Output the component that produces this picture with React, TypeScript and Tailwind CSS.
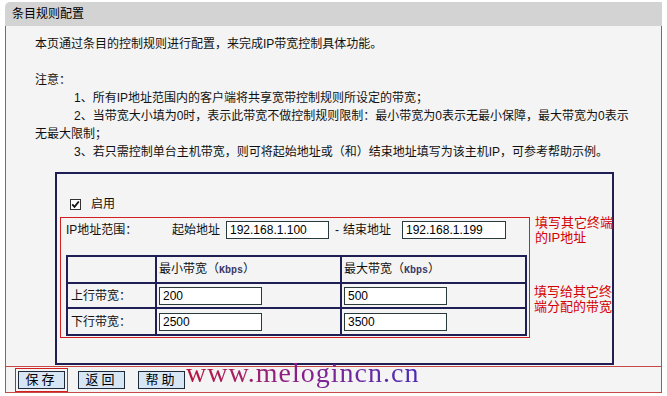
import React from "react";

const NAVY = "border-[#1f1f55]";

function Input({ value, w = "w-[103px]" }: { value: string; w?: string }) {
  return (
    <div
      className={`${w} h-[18px] border border-[#2a3a3a] bg-white pl-[3px] text-[12px] leading-[16px] text-black flex items-center`}
      style={{ fontFamily: '"Liberation Sans", Arial, sans-serif' }}
    >
      {value}
    </div>
  );
}

function Btn({ label }: { label: string }) {
  return (
    <div className="w-[47px] h-[18px] border border-[#1c2a3c] bg-[#d6e6f5] flex items-center justify-center text-[13px] leading-[16px] text-black tracking-[3px]">
      {label}
    </div>
  );
}

export default function App() {
  return (
    <div
      className="w-[667px] h-[396px] bg-white relative overflow-hidden text-[12px] text-[#111]"
      style={{ fontFamily: '"Liberation Sans", "Noto Sans CJK SC", sans-serif' }}
    >
      <div className="pt-[2px]">
        {/* title bar */}
        <div className="mx-[5px] h-[24px] bg-[#d3d3d3] rounded-tl-[5px] pl-[7px] flex items-center text-[12px] text-black">
          条目规则配置
        </div>

        {/* main content */}
        <div className="mx-[5px] h-[340px] border-x border-[#c84848] bg-[#f4f4f4] pl-[29px] pt-[9px] leading-[18px]">
          <div>本页通过条目的控制规则进行配置，来完成IP带宽控制具体功能。</div>
          <div className="mt-[18px]">注意：</div>
          <div className="pl-[39px]">1、所有IP地址范围内的客户端将共享宽带控制规则所设定的带宽；</div>
          <div className="pl-[39px]">2、当带宽大小填为0时，表示此带宽不做控制规则限制：最小带宽为0表示无最小保障，最大带宽为0表示</div>
          <div>无最大限制；</div>
          <div className="pl-[39px]">3、若只需控制单台主机带宽，则可将起始地址或（和）结束地址填写为该主机IP，可参考帮助示例。</div>

          {/* navy box */}
          <div className={`mt-[11px] ml-[20px] w-[559px] h-[193px] border-2 ${NAVY}`}>
            <div className="mt-[23px] h-[14px] pl-[13px] flex items-center">
              <span className="w-[11px] h-[11px] border border-[#333] bg-white flex items-center justify-center">
                <svg width="9" height="9" viewBox="0 0 9 9">
                  <path d="M1.2 4.3 L3.5 6.8 L7.8 1.5" fill="none" stroke="#111" strokeWidth="1.8" />
                </svg>
              </span>
              <span className="ml-[10px] leading-[14px]">启用</span>
            </div>

            <div className="mt-[6px] ml-[3px] flex items-start">
              {/* red annotation box */}
              <div className="w-[470px] h-[121px] shrink-0 border border-[#d02020] pt-[3px]">
                <div className="pl-[5px] flex items-center h-[18px]">
                  <span className="w-[106px]">IP地址范围：</span>
                  <span className="w-[54px]">起始地址</span>
                  <Input value="192.168.1.100" />
                  <span className="ml-[6px]">-</span>
                  <span className="ml-[4px] w-[59px]">结束地址</span>
                  <Input value="192.168.1.199" w="w-[104px]" />
                </div>

                <table className={`mt-[16px] ml-[5px] border-collapse table-fixed w-[459px] border-2 ${NAVY}`}>
                  <colgroup>
                    <col className="w-[89px]" />
                    <col className="w-[185px]" />
                    <col className="w-[185px]" />
                  </colgroup>
                  <tbody>
                    <tr className="h-[27px]">
                      <td className={`border-2 ${NAVY}`}></td>
                      <td className={`border-2 ${NAVY} pl-[2px]`}>
                        最小带宽（
                        <span className="text-[10px] font-bold text-[#3a3a6a]" style={{ fontFamily: '"Liberation Mono", monospace' }}>
                          Kbps
                        </span>
                        ）
                      </td>
                      <td className={`border-2 ${NAVY} pl-[2px]`}>
                        最大带宽（
                        <span className="text-[10px] font-bold text-[#3a3a6a]" style={{ fontFamily: '"Liberation Mono", monospace' }}>
                          Kbps
                        </span>
                        ）
                      </td>
                    </tr>
                    <tr className="h-[25px]">
                      <td className={`border-2 ${NAVY} pl-[3px]`}>上行带宽：</td>
                      <td className={`border-2 ${NAVY} pl-[2px]`}>
                        <Input value="200" />
                      </td>
                      <td className={`border-2 ${NAVY} pl-[2px]`}>
                        <Input value="500" />
                      </td>
                    </tr>
                    <tr className="h-[27px]">
                      <td className={`border-2 ${NAVY} pl-[3px]`}>下行带宽：</td>
                      <td className={`border-2 ${NAVY} pl-[2px]`}>
                        <Input value="2500" />
                      </td>
                      <td className={`border-2 ${NAVY} pl-[2px]`}>
                        <Input value="3500" />
                      </td>
                    </tr>
                  </tbody>
                </table>
              </div>

              {/* annotations */}
              <div className="ml-[5px] -mt-[2px] flex flex-col whitespace-nowrap text-[13px] leading-[15px] text-[#d40000]">
                <div className="whitespace-nowrap">
                  填写其它终端
                  <br />
                  的IP地址
                </div>
                <div className="mt-[39px] -ml-[1px] whitespace-nowrap">
                  填写给其它终
                  <br />
                  端分配的带宽
                </div>
              </div>
            </div>
          </div>
        </div>

        {/* button row */}
        <div className="mx-[5px] h-[27px] border border-[#c84848] bg-[#f4f4f4] flex items-center">
          <div className="ml-[9px] border border-[#d02020] p-[2px]">
            <Btn label="保存" />
          </div>
          <div className="ml-[10px]">
            <Btn label="返回" />
          </div>
          <div className="ml-[13px]">
            <Btn label="帮助" />
          </div>
        </div>
      </div>

      {/* watermark */}
      <div
        className="absolute left-[186px] top-[357px] text-[28px] leading-[32px] tracking-[1px] bg-gradient-to-r from-[#b8103a] via-[#8a1c8c] to-[#4a28b8] bg-clip-text text-transparent"
        style={{ fontFamily: '"Liberation Serif", serif' }}
      >
        www.melogincn.cn
      </div>
    </div>
  );
}
